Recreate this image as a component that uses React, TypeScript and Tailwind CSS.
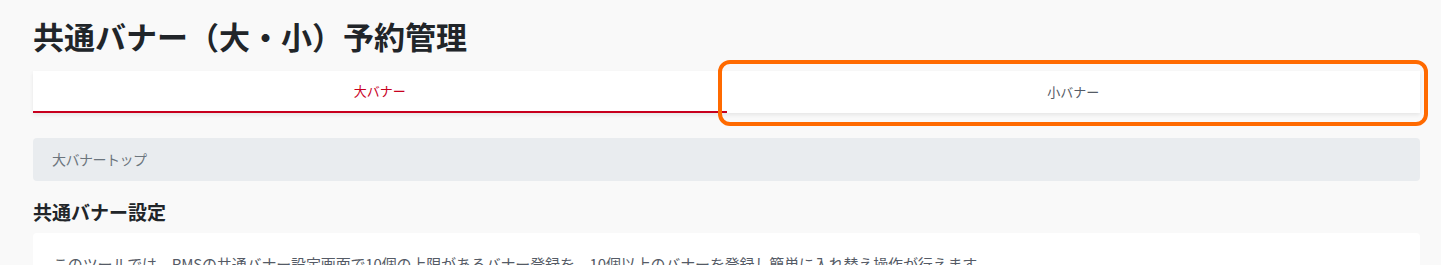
import React from 'react';

const font = { fontFamily: '"Noto Sans CJK JP", "Noto Sans", sans-serif' };

export default function App() {
  return (
    <div className="min-h-screen bg-[#f9f9f9] pt-[16px] pl-[33px] pr-[21px]" style={font}>
      <h1 className="text-[31px] font-bold leading-[40px] text-[#212529]">共通バナー（大・小）予約管理</h1>

      <div className="mt-[15px] flex h-[42px] bg-white shadow-[0_2px_4px_rgba(0,0,0,0.08)]">
        <button className="flex-1 flex items-center justify-center border-b-2 border-[#c8001e] text-[13px] text-[#c8001e]">
          大バナー
        </button>
        <button className="relative flex-1 flex items-center justify-center text-[13px] text-[#555b66]">
          小バナー
          <span className="pointer-events-none absolute left-[-9px] right-[-8px] top-[-11px] bottom-[-13px] rounded-[12px] border-4 border-[#ff6a00]" />
        </button>
      </div>

      <div className="mt-[25px] flex h-[43px] items-center rounded bg-[#e9ecef] px-[19px] text-[14px] tracking-[-0.5px] text-[#6c757d]">
        大バナートップ
      </div>

      <h2 className="mt-[19px] text-[19px] font-bold leading-[24px] text-[#212529]">共通バナー設定</h2>

      <div className="mt-[9px] rounded bg-white p-[20px] text-[15px] tracking-[-0.15px] text-[#555b66]">
        このツールでは、RMSの共通バナー設定画面で10個の上限があるバナー登録を、10個以上のバナーを登録し簡単に入れ替え操作が行えます。
      </div>
    </div>
  );
}
